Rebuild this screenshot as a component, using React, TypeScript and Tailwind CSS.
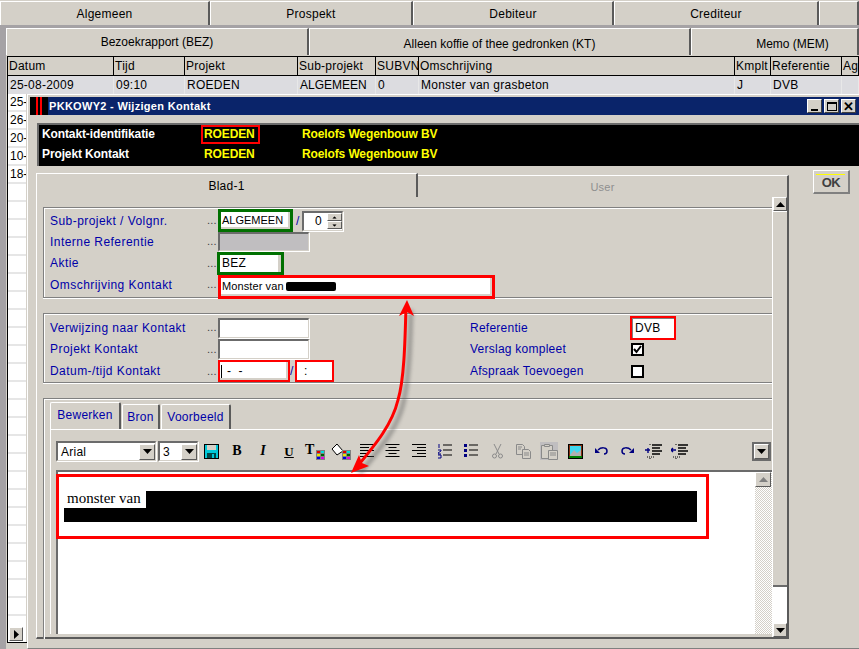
import type { ReactNode } from "react";

const font = "font-['Liberation_Sans',Arial,sans-serif]";
const topTabs = [
  ["Algemeen", "w-[210px]"],
  ["Prospekt", "w-[203px]"],
  ["Debiteur", "w-[201px]"],
  ["Crediteur", "w-[205px]"],
  ["", "w-[40px]"],
];
const subTabs = [
  ["Bezoekrapport (BEZ)", "w-[303px] pb-[1px]"],
  ["Alleen koffie of thee gedronken (KT)", "w-[382px] pt-[3px]"],
  ["Memo (MEM)", "w-[168px] pl-[36px] pt-[3px]"],
];
const head = ["Datum", "Tijd", "Projekt", "Sub-projekt", "SUBVN", "Omschrijving", "Kmplt", "Referentie", "Age"];
const row = ["25-08-2009", "09:10", "ROEDEN", "ALGEMEEN", "0", "Monster van grasbeton", "J", "DVB", ""];
const gridCols = "grid-cols-[106px_71px_113px_78px_43px_316px_36px_71px_17px]";
const sideRows = ["25-", "26-", "20-", "10-", "18-", ...Array(24).fill("")];

function Tab({ label, cls }: { label: string; cls: string }) {
  return (
    <div className={`flex h-full items-center justify-center overflow-hidden whitespace-nowrap border-t border-l border-t-white border-l-white border-r-2 border-r-[#5a5a5a] bg-[#d4d0c8] ${cls}`}>
      {label}
    </div>
  );
}

function Sunken({ cls, children }: { cls: string; children?: ReactNode }) {
  return (
    <div className={`flex items-center overflow-hidden whitespace-nowrap border-t-2 border-l-2 border-t-[#6b6b6b] border-l-[#6b6b6b] border-r border-b border-r-[#d4d0c8] border-b-[#d4d0c8] shadow-[1px_1px_0_#fff] ${cls}`}>
      {children}
    </div>
  );
}

function Row({ label, h, children }: { label: string; h: string; children: ReactNode }) {
  return (
    <div className={`flex items-center ${h}`}>
      <span className="w-[163px] pl-[6px] tracking-[0.45px] text-[#0000a8]">{label}</span>
      <span className="w-[11px] text-[11px] leading-none text-[#404040]">...</span>
      {children}
    </div>
  );
}

function Lines({ w = [14, 14, 14, 14, 14], center, right }: { w?: number[]; center?: boolean; right?: boolean }) {
  return (
    <svg width="16" height="14" viewBox="0 0 16 14">
      {w.map((n, i) => (
        <rect key={i} x={center ? (15 - n) / 2 : right ? 15 - n : 1} y={i * 3} width={n} height="1" fill="#000" />
      ))}
    </svg>
  );
}

function Swatch() {
  return (
    <g>
      <rect x="11" y="7" width="9" height="10" fill="#808080" />
      <rect x="12" y="8" width="3" height="2" fill="#e00000" />
      <rect x="16" y="8" width="3" height="2" fill="#00e0e0" />
      <rect x="12" y="11" width="3" height="2" fill="#e8e800" />
      <rect x="16" y="11" width="3" height="2" fill="#006000" />
      <rect x="12" y="14" width="3" height="2" fill="#0000e0" />
      <rect x="16" y="14" width="3" height="2" fill="#e000e0" />
    </g>
  );
}

const tools: ReactNode[] = [
  <svg key="save" width="15" height="15" viewBox="0 0 15 15">
    <rect x="0.5" y="0.5" width="14" height="14" fill="#00c8d8" stroke="#000" />
    <rect x="3" y="1" width="9" height="5" fill="#d4d0c8" />
    <rect x="3" y="9" width="9" height="5" fill="#004848" />
    <rect x="8" y="10" width="2" height="4" fill="#00c8d8" />
  </svg>,
  <span key="b" className="font-['Liberation_Serif',serif] text-[14px] font-bold leading-none">B</span>,
  <span key="i" className="font-['Liberation_Serif',serif] text-[14px] font-bold italic leading-none">I</span>,
  <span key="u" className="font-['Liberation_Serif',serif] text-[13px] font-bold leading-none underline">U</span>,
  <span key="t" className="relative flex h-[17px] w-[20px]">
    <span className="font-['Liberation_Serif',serif] text-[14px] font-bold leading-none">T</span>
    <svg className="absolute left-0 top-0" width="20" height="17" viewBox="0 0 20 17"><Swatch /></svg>
  </span>,
  <svg key="fill" width="20" height="17" viewBox="0 0 20 17">
    <path d="M6 1 L12 8 L6 12 L1 6 Z" fill="#fff" stroke="#000" />
    <Swatch />
  </svg>,
  <Lines key="al" w={[14, 9, 14, 9, 14]} />,
  <Lines key="ac" w={[14, 8, 14, 8, 14]} center />,
  <Lines key="ar" w={[14, 9, 14, 9, 14]} right />,
  <svg key="ol" width="15" height="15" viewBox="0 0 15 15">
    <path d="M1 0v4M0 6h3v1L0 9v1h3M0 11h3v3H0" stroke="#000080" fill="none" />
    <path d="M5 1h9M5 6h9M5 11h9" stroke="#000" />
  </svg>,
  <svg key="ul" width="15" height="15" viewBox="0 0 15 15">
    <rect x="0" y="0" width="3" height="3" fill="#000080" />
    <rect x="0" y="5" width="3" height="3" fill="#000080" />
    <rect x="0" y="10" width="3" height="3" fill="#000080" />
    <path d="M5 1h9M5 6h9M5 11h9" stroke="#000" />
  </svg>,
  <svg key="cut" width="11" height="15" viewBox="0 0 11 15" fill="none" stroke="#8a8a8a">
    <path d="M2 0l5 10M9 0L4 10" />
    <circle cx="2.5" cy="12" r="2" />
    <circle cx="8.5" cy="12" r="2" />
  </svg>,
  <svg key="copy" width="15" height="15" viewBox="0 0 15 15" fill="#d4d0c8" stroke="#8a8a8a">
    <path d="M0.5 0.5h6l2 2v8h-8z" />
    <path d="M6.5 5.5h6l2 2v7h-8z" />
    <path d="M2 3h4M2 5h3M8 9h5M8 11h5" />
  </svg>,
  <span key="paste" className="flex h-[18px] w-[18px] items-center justify-center bg-[#c0bec0]">
    <svg width="17" height="17" viewBox="0 0 17 17" fill="#d4d0c8" stroke="#8a8a8a">
      <path d="M0.5 2.5h11v13h-11z" />
      <path d="M3.5 3.5v-2h5v2z" />
      <path d="M7.5 7.5h9v9h-9z" />
      <path d="M9 10h6M9 12h6" />
    </svg>
  </span>,
  <svg key="img" width="15" height="15" viewBox="0 0 15 15">
    <rect width="15" height="15" fill="#000" />
    <rect x="1" y="1" width="13" height="13" fill="#8a3010" />
    <rect x="2" y="2" width="11" height="11" fill="#40d8f0" />
    <path d="M2 11l4-5 3 3 4-3v7H2z" fill="#b0b0b0" />
    <rect x="1" y="12" width="13" height="2" fill="#008000" />
  </svg>,
  <svg key="undo" width="13" height="10" viewBox="0 0 13 10" fill="none">
    <path d="M3 4C6 1 12 1 12 5c0 2-1 3-3 3" stroke="#000080" strokeWidth="1.5" />
    <path d="M0 2v5h5z" fill="#000080" />
  </svg>,
  <svg key="redo" width="13" height="10" viewBox="0 0 13 10" fill="none">
    <path d="M10 4C7 1 1 1 1 5c0 2 1 3 3 3" stroke="#000080" strokeWidth="1.5" />
    <path d="M13 2v5H8z" fill="#000080" />
  </svg>,
  <svg key="ind" width="17" height="15" viewBox="0 0 17 15">
    <path d="M0 6h5M3 4v5" stroke="#000080" strokeWidth="1.4" />
    <path d="M7 1h10M7 4h8M7 7h10M7 10h8" stroke="#000" strokeWidth="1.4" />
    <path d="M2 13h8M5 0v1M5 14v1" stroke="#000" strokeDasharray="1 1" />
  </svg>,
  <svg key="out" width="17" height="15" viewBox="0 0 17 15">
    <path d="M0 6h5M2 4L0 6l2 2" stroke="#000080" strokeWidth="1.4" fill="none" />
    <path d="M7 1h10M7 4h8M7 7h10M7 10h8" stroke="#000" strokeWidth="1.4" />
    <path d="M2 13h8M5 0v1M5 14v1" stroke="#000" strokeDasharray="1 1" />
  </svg>,
];

function ArrowBtn({ up, grey, cls }: { up?: boolean; grey?: boolean; cls: string }) {
  return (
    <div className={`flex items-center justify-center border-t border-l border-t-white border-l-white border-r border-b border-r-[#5a5a5a] border-b-[#5a5a5a] bg-[#d4d0c8] ${cls}`}>
      <svg width="9" height="5" viewBox="0 0 9 5">
        <path d={up ? "M4.5 0L9 5H0z" : "M0 0h9L4.5 5z"} fill={grey ? "#808080" : "#000"} />
      </svg>
    </div>
  );
}

function Combo({ cls, text }: { cls: string; text: string }) {
  return (
    <Sunken cls={`h-[20px] justify-between bg-white pl-[3px] ${cls}`}>
      <span>{text}</span>
      <ArrowBtn cls="h-[16px] w-[16px]" />
    </Sunken>
  );
}

export default function App() {
  return (
    <div className={`relative h-[649px] w-[859px] overflow-hidden bg-[#a5a2a5] text-[12px] tracking-[0.25px] text-black ${font}`}>
      <div className="flex h-[25px] w-[859px] bg-[#d4d0c8] pt-[1px]">
        {topTabs.map(([label, cls], i) => <Tab key={i} label={label} cls={cls} />)}
      </div>

      <div className="ml-[6px] mt-[3px] h-[621px] bg-[#d4d0c8]">
        <div className="flex h-[27px] tracking-normal">
          {subTabs.map(([label, cls]) => <Tab key={label} label={label} cls={cls} />)}
        </div>
        <div className="ml-[1px] mt-[1px] border-t border-l border-b border-black bg-white">
          <div className={`grid h-[19px] border-b border-black bg-[#d4d0c8] ${gridCols}`}>
            {head.map((h) => (
              <div key={h} className="flex items-center overflow-hidden whitespace-nowrap border-r border-black pl-[1px]">{h}</div>
            ))}
          </div>
          <div className={`grid h-[18px] bg-[#dcdce0] ${gridCols}`}>
            {row.map((c, i) => (
              <div key={i} className={`flex items-center overflow-hidden whitespace-nowrap border-r border-[#e8e8e8] pl-[2px] ${i === 3 ? "tracking-normal" : ""}`}>{c}</div>
            ))}
          </div>
          <div className="relative h-[548px] w-[19px] border-r border-[#d4d0c8]">
            {sideRows.map((s, i) => (
              <div key={i} className="flex h-[18px] items-center overflow-hidden border-b-2 border-[#e6e6e6] pl-[2px] tracking-normal">{s}</div>
            ))}
            <ArrowBtn cls="absolute left-[1px] top-[533px] h-[14px] w-[14px] [&_svg]:-rotate-90" />
          </div>
        </div>
      </div>

      {/* dialog over the list */}
      <div className="absolute left-[27px] top-[94px] h-[555px] w-[832px] border-l border-t border-b border-b-[#808080] border-l-white border-t-white bg-[#d4d0c8]">
        <div className="ml-[2px] mt-[2px] flex h-[18px] items-center bg-[#0a246a]">
          <div className="flex h-full w-[18px] justify-center gap-[2px] bg-black">
            <span className="w-[2px] bg-[#ff0000]" />
            <span className="w-[2px] bg-[#ff0000]" />
          </div>
          <span className="ml-[1px] text-[11px] font-bold tracking-[0.3px] text-white">PKKOWY2 - Wijzigen Kontakt</span>
          <div className="ml-auto mr-[3px] flex gap-[2px]">
            {[
              <span key="m" className="mt-[8px] h-[2px] w-[7px] bg-black" />,
              <span key="x" className="h-[9px] w-[10px] border border-t-2 border-black" />,
              <span key="c" className="text-[13px] font-bold leading-none">✕</span>,
            ].map((g, i) => (
              <div key={i} className="flex h-[14px] w-[15px] items-center justify-center border-t border-l border-t-white border-l-white border-r border-b border-r-[#404040] border-b-[#404040] bg-[#d4d0c8]">{g}</div>
            ))}
          </div>
        </div>

        <div className="relative ml-[9px] mt-[8px] grid h-[43px] grid-cols-[162px_98px_1fr] content-center gap-y-[2px] border-t-2 border-l-2 border-[#6b6b6b] bg-black pb-[3px] pl-[3px] text-[12px] font-bold tracking-[-0.12px]">
          <span className="text-white">Kontakt-identifikatie</span>
          <span className="text-[#ffff00]">ROEDEN</span>
          <span className="text-[#ffff00]">Roelofs Wegenbouw BV</span>
          <span className="text-white">Projekt Kontakt</span>
          <span className="text-[#ffff00]">ROEDEN</span>
          <span className="text-[#ffff00]">Roelofs Wegenbouw BV</span>
          <span className="absolute left-[162px] top-[0px] h-[19px] w-[59px] border-2 border-[#ff0000]" />
        </div>

        <div className="flex">
          <div className="ml-[8px] mt-[7px] w-[753px]">
            <div className="flex h-[24px] items-end">
              <div className="flex h-[24px] w-[382px] items-center justify-center border-t border-l border-t-white border-l-white border-r-2 border-r-[#5a5a5a]">Blad-1</div>
              <div className="flex h-[22px] w-[371px] items-center justify-center border-t border-t-white border-r-2 border-r-[#5a5a5a] pt-[2px] text-[11px] text-[#8f8f8f]">User</div>
            </div>

            <div className="flex h-[442px] border-l border-b-2 border-r-2 border-l-white border-b-[#5a5a5a] border-r-[#5a5a5a]">
              <div className="w-[735px] pl-[6px] pt-[10px]">
                <div className="h-[91px] border-t border-l border-b border-[#808080] pt-[2px] shadow-[inset_1px_1px_0_#fff,0_1px_0_#fff]">
                  <Row label="Sub-projekt / Volgnr." h="h-[21px]">
                    <div className="flex h-[23px] w-[75px] items-center overflow-hidden whitespace-nowrap border-[3px] border-[#007000] bg-white pl-[1px] text-[11px] tracking-normal shadow-[inset_-2px_-2px_0_#d4d0c8]">ALGEMEEN</div>
                    <span className="ml-[3px] w-[6px] text-[#0000a8]">/</span>
                    <Sunken cls="h-[20px] w-[41px] justify-between bg-white pl-[11px]">
                      <span>0</span>
                      <div className="flex flex-col">
                        <ArrowBtn up cls="h-[8px] w-[15px] [&_svg]:scale-50" />
                        <ArrowBtn cls="h-[8px] w-[15px] [&_svg]:scale-50" />
                      </div>
                    </Sunken>
                  </Row>
                  <Row label="Interne Referentie" h="h-[21px]">
                    <Sunken cls="h-[19px] w-[91px] bg-[#c0bec0]" />
                  </Row>
                  <Row label="Aktie" h="h-[22px]">
                    <div className="-ml-[1px] flex h-[23px] w-[67px] items-center border-[3px] border-[#007000] bg-white pl-[2px]">
                      <span className="flex-1">BEZ</span>
                      <span className="h-full w-[3px] bg-[#d4d0c8]" />
                    </div>
                  </Row>
                  <Row label="Omschrijving Kontakt" h="h-[21px]">
                    <div className="mt-[4px] flex h-[24px] w-[277px] items-center whitespace-nowrap border-[3px] border-[#ff0000] bg-white pl-[1px] text-[11px] tracking-[0.1px] shadow-[inset_-2px_-2px_0_#d4d0c8]">
                      Monster van
                      <span className="ml-[2px] h-[9px] w-[50px] rounded-[2px] bg-black" />
                    </div>
                  </Row>
                </div>

                <div className="mt-[15px] flex h-[70px] border-t border-l border-b border-[#808080] pt-[3px] shadow-[inset_1px_1px_0_#fff,0_1px_0_#fff]">
                  <div className="w-[426px]">
                    <Row label="Verwijzing naar Kontakt" h="h-[21px]">
                      <Sunken cls="h-[20px] w-[91px] bg-white" />
                    </Row>
                    <Row label="Projekt Kontakt" h="h-[22px]">
                      <Sunken cls="h-[20px] w-[91px] bg-white" />
                    </Row>
                    <Row label="Datum-/tijd Kontakt" h="h-[22px]">
                      <div className="flex h-[22px] w-[72px] items-center border-[2px] border-[#ff0000] bg-white pl-[1px] shadow-[inset_-2px_-2px_0_#d4d0c8]">
                        <span className="mr-[5px] h-[13px] w-[1px] bg-black" />
                        <span>-&nbsp;&nbsp;-</span>
                      </div>
                      <span className="w-[5px] text-[#0000a8]">/</span>
                      <div className="flex h-[22px] w-[39px] items-center border-[2px] border-[#ff0000] bg-white pl-[7px]">:</div>
                    </Row>
                  </div>
                  <div className="flex-1 text-[#0000a8]">
                    <div className="flex h-[21px] items-center">
                      <span className="w-[160px]">Referentie</span>
                      <div className="flex h-[24px] w-[46px] items-center border-[2px] border-[#ff0000] bg-white pl-[3px] text-black shadow-[inset_1px_1px_0_#808080]">DVB</div>
                    </div>
                    <div className="flex h-[22px] items-center">
                      <span className="w-[161px]">Verslag kompleet</span>
                      <div className="flex h-[13px] w-[13px] items-center justify-center border-2 border-black bg-white">
                        <svg width="9" height="9" viewBox="0 0 9 9"><path d="M1 4l2.5 3L8 1" stroke="#000" strokeWidth="2" fill="none" /></svg>
                      </div>
                    </div>
                    <div className="flex h-[22px] items-center">
                      <span className="w-[161px]">Afspraak Toevoegen</span>
                      <div className="h-[13px] w-[13px] border-2 border-black bg-white" />
                    </div>
                  </div>
                </div>

                <div className="mt-[15px] h-[241px] border-t border-l border-[#808080] shadow-[inset_1px_1px_0_#fff]">
                  <div className="ml-[6px] flex h-[31px] items-end border-b border-white text-[#0000a8]">
                    <div className="flex h-[27px] w-[71px] items-center justify-center rounded-t-[2px] border-t border-l border-r-2 border-t-white border-l-white border-r-[#5a5a5a] pb-[3px]">Bewerken</div>
                    <div className="ml-[1px] flex h-[25px] w-[38px] items-center justify-center rounded-t-[2px] border-t border-l border-r-2 border-t-white border-l-white border-r-[#5a5a5a]">Bron</div>
                    <div className="ml-[1px] flex h-[25px] w-[70px] items-center justify-center rounded-t-[2px] border-t border-l border-r-2 border-t-white border-l-white border-r-[#5a5a5a]">Voorbeeld</div>
                  </div>
                  <div className="ml-[6px] border-l border-white pl-[5px]">
                    <div className="flex h-[40px] items-center pt-[2px]">
                      <Combo cls="w-[100px]" text="Arial" />
                      <Combo cls="ml-[2px] w-[40px]" text="3" />
                      <div className="flex">
                        {tools.map((t, i) => (
                          <div key={i} className="flex h-[24px] w-[26px] items-center justify-center">{t}</div>
                        ))}
                      </div>
                      <div className="ml-[60px] flex h-[19px] w-[19px] items-center justify-center border-2 border-[#6b6b6b]">
                        <ArrowBtn cls="h-[15px] w-[15px]" />
                      </div>
                    </div>
                    <div className="flex h-[164px] w-[716px] border-t-2 border-l-2 border-t-[#6b6b6b] border-l-[#6b6b6b] bg-white">
                      <div className="flex-1 bg-white">
                        <div className="relative font-['Liberation_Serif',serif] text-[15px] tracking-normal">
                          <span className="absolute left-[9px] top-[15px] bg-white pr-[4px]">monster van</span>
                          <span className="absolute left-[88px] top-[19px] h-[17px] w-[551px] bg-black" />
                          <span className="absolute left-[6px] top-[36px] h-[14px] w-[633px] bg-black" />
                        </div>
                      </div>
                      <div className="flex w-[17px] flex-col bg-[repeating-conic-gradient(#d4d0c8_0_25%,#fff_0_50%)] bg-[length:2px_2px]">
                        <ArrowBtn up grey cls="h-[15px] w-[16px]" />
                      </div>
                    </div>
                  </div>
                </div>
              </div>
              <div className="flex w-[15px] flex-col border-l border-white">
                <ArrowBtn up cls="h-[14px] w-full" />
                <div className="h-[376px] border-t border-white border-b-2 border-b-[#6b6b6b]" />
                <div className="flex-1 bg-white" />
                <ArrowBtn cls="h-[14px] w-full" />
              </div>
            </div>
          </div>
          <div className="relative ml-[24px] mt-[4px] flex h-[24px] w-[37px] items-center justify-center border-t border-l border-t-white border-l-white border-r-2 border-b-2 border-r-[#808080] border-b-[#808080] pt-[3px] text-[13px] font-bold tracking-[-0.5px] text-[#404040]">
            <span className="absolute left-[2px] right-[3px] top-[3px] h-[1px] bg-[#ffff00]" />
            OK
          </div>
        </div>
      </div>

      {/* annotations drawn on the screenshot */}
      <div className="absolute left-[56px] top-[474px] h-[65px] w-[653px] border-[3px] border-[#ff0000]" />
      <svg className="pointer-events-none absolute left-0 top-0" width="859" height="649" viewBox="0 0 859 649" fill="none">
        <path className="blur-[2px]" d="M411 310C410 345 409 380 403 404C397 429 380 449 360 473" stroke="#555" strokeWidth="3" opacity="0.7" />
        <path d="M406 306C405 345 404 380 398 400C392 425 375 445 356 468" stroke="#ff0000" strokeWidth="3" />
        <path d="M407 300L399 316L407 312L414 316Z" fill="#ff0000" />
        <path d="M351 473L369 466L362 463L359 455Z" fill="#ff0000" />
      </svg>
    </div>
  );
}
